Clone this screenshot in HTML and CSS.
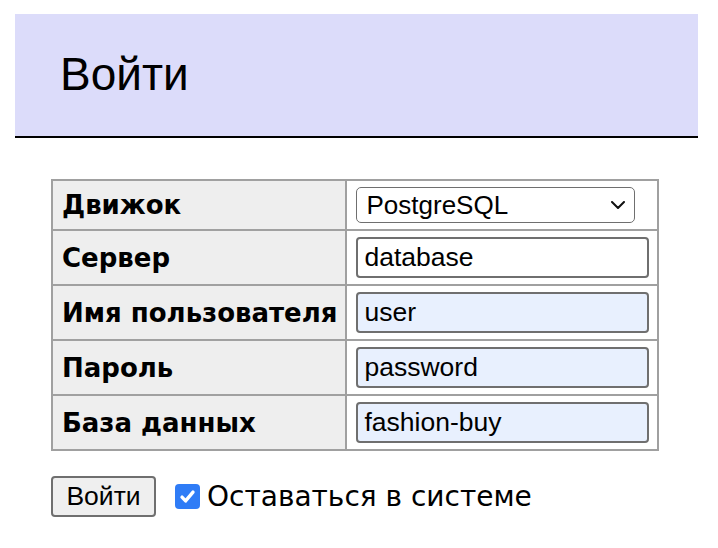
FILE: index.html
```html
<!DOCTYPE html>
<html lang="ru">
<head>
<meta charset="utf-8">
<title>Войти</title>
<link rel="stylesheet" href="styles.css">
</head>
<body>
<div class="content">
  <h2 class="title">Войти</h2>
  <form class="login">
    <table class="fields">
      <tr class="first">
        <th>Движок</th>
        <td>
          <div class="select">
            <span>PostgreSQL</span>
            <svg class="chev" width="14" height="8" viewBox="0 0 14 8"><path d="M1 1l6 6 6-6" fill="none" stroke="#111" stroke-width="2" stroke-linecap="round" stroke-linejoin="round"/></svg>
          </div>
        </td>
      </tr>
      <tr>
        <th>Сервер</th>
        <td><input class="field" type="text" value="database"></td>
      </tr>
      <tr>
        <th>Имя пользователя</th>
        <td><input class="field filled" type="text" value="user"></td>
      </tr>
      <tr>
        <th>Пароль</th>
        <td><input class="field filled" type="text" value="password"></td>
      </tr>
      <tr>
        <th>База данных</th>
        <td><input class="field filled" type="text" value="fashion-buy"></td>
      </tr>
    </table>
    <div class="actions">
      <button type="button" class="btn">Войти</button>
      <label class="remember">
        <span class="check"><svg width="19" height="19" viewBox="0 0 18 18"><path d="M3.8 9.6l3.4 3.6L14.2 4.8" fill="none" stroke="#fff" stroke-width="3.2" stroke-linecap="round" stroke-linejoin="round"/></svg></span>
        <span>Оставаться в системе</span>
      </label>
    </div>
  </form>
</div>
</body>
</html>
```

FILE: styles.css
```css
html, body {
  margin: 0;
  padding: 0;
  background: #fff;
}
body {
  font-family: "DejaVu Sans", Verdana, sans-serif;
  color: #000;
}
.content {
  padding: 14px 20px 0 15px;
}
.title {
  margin: 0;
  height: 124px;
  box-sizing: border-box;
  padding: 0 0 2px 45px;
  display: flex;
  align-items: center;
  background: #dcdcfa;
  border-bottom: 2px solid #000;
  font-family: "Liberation Sans", Arial, sans-serif;
  font-weight: normal;
  font-size: 46px;
  color: #000;
}
.login {
  margin: 41px 0 0 36px;
}
.fields {
  border-collapse: collapse;
  border: 2px solid #a0a0a0;
}
.fields th, .fields td {
  border: 2px solid #a0a0a0;
  padding: 6px 8px 6px 9px;
  height: 41px;
  line-height: 1;
}
.fields th {
  background: #eee;
  text-align: left;
  font-family: "DejaVu Sans", Verdana, sans-serif;
  font-weight: bold;
  font-size: 26px;
  padding-left: 9px;
  padding-right: 8px;
  white-space: nowrap;
}
.fields tr.first th, .fields tr.first td {
  height: 36px;
}
.select {
  box-sizing: border-box;
  width: 279px;
  height: 36px;
  border: 1.5px solid #6f6f6f;
  border-radius: 5px;
  display: flex;
  align-items: center;
  justify-content: space-between;
  padding: 0 9px 0 9px;
  font-family: "Liberation Sans", Arial, sans-serif;
  font-size: 26px;
}
.field {
  box-sizing: border-box;
  display: block;
  width: 293px;
  height: 41px;
  margin: 0;
  border: 2px solid #6f6f6f;
  border-radius: 4px;
  padding: 0 6px;
  font-family: "Liberation Sans", Arial, sans-serif;
  font-size: 26.5px;
  color: #000;
  background: #fff;
  outline: none;
}
.field.filled {
  background: #e8f0fe;
}
.actions {
  margin-top: 25px;
  display: flex;
  align-items: center;
  gap: 19px;
}
.btn {
  box-sizing: border-box;
  width: 105px;
  height: 41px;
  border: 2px solid #6f6f6f;
  border-radius: 4px;
  background: #efefef;
  font-family: "Liberation Sans", Arial, sans-serif;
  font-size: 26.5px;
  color: #000;
  padding: 0;
}
.remember {
  display: flex;
  align-items: center;
  gap: 7px;
  font-family: "DejaVu Sans", Verdana, sans-serif;
  font-size: 28px;
}
.check {
  width: 25px;
  height: 25px;
  border-radius: 4px;
  background: #2f7cf6;
  display: flex;
  align-items: center;
  justify-content: center;
}
```
